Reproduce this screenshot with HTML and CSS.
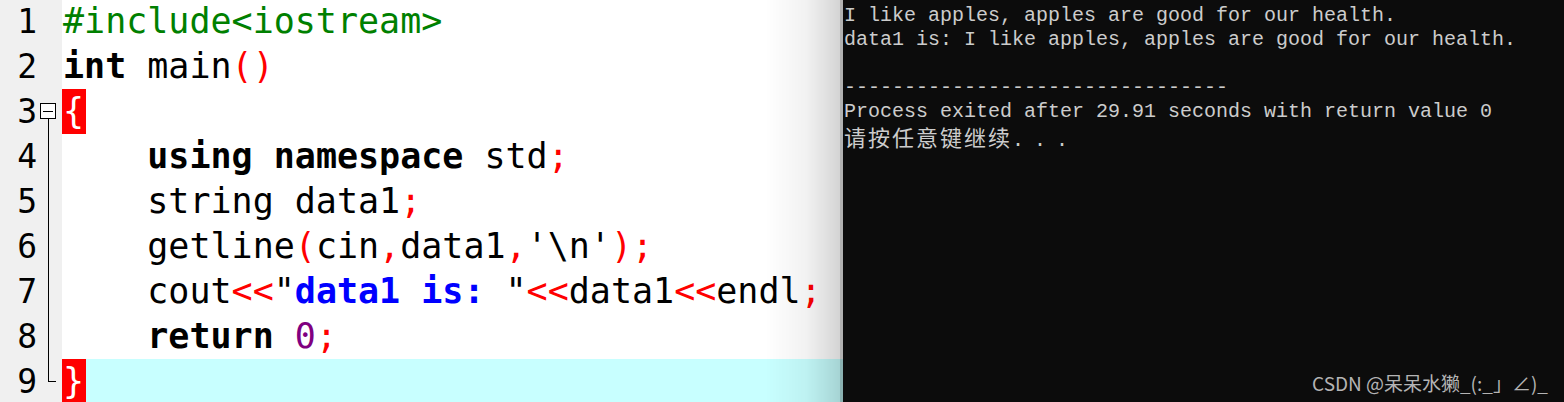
FILE: index.html
```html
<!DOCTYPE html>
<html lang="zh-CN">
<head>
<meta charset="utf-8">
<title>Dev-C++ getline</title>
<link rel="stylesheet" href="styles.css">
</head>
<body>
<div class="screen">
  <div class="editor">
    <div class="gutter">
      <div class="numbers">
        <div class="num">1</div>
        <div class="num">2</div>
        <div class="num">3</div>
        <div class="num">4</div>
        <div class="num">5</div>
        <div class="num">6</div>
        <div class="num">7</div>
        <div class="num">8</div>
        <div class="num">9</div>
      </div>
      <div class="fold">
        <svg class="fold-svg" width="24" height="402" viewBox="0 0 24 402">
          <rect x="2.5" y="103.5" width="15" height="15" fill="#ffffff" stroke="#000000" stroke-width="1"/>
          <line x1="5" y1="111.5" x2="15" y2="111.5" stroke="#000000" stroke-width="1"/>
          <line x1="10.5" y1="119" x2="10.5" y2="381" stroke="#000000" stroke-width="1"/>
          <line x1="10" y1="381.5" x2="18" y2="381.5" stroke="#000000" stroke-width="1"/>
        </svg>
      </div>
    </div>
    <div class="code">
      <div class="line"><span class="pre">#include&lt;iostream&gt;</span></div>
      <div class="line"><span class="kw">int</span> main<span class="sym">()</span></div>
      <div class="line"><span class="match">{</span></div>
      <div class="line">    <span class="kw">using</span> <span class="kw">namespace</span> std<span class="sym">;</span></div>
      <div class="line">    string data1<span class="sym">;</span></div>
      <div class="line">    getline<span class="sym">(</span>cin<span class="sym">,</span>data1<span class="sym">,</span>'\n'<span class="sym">);</span></div>
      <div class="line">    cout<span class="sym">&lt;&lt;</span>"<span class="str">data1 is: </span>"<span class="sym">&lt;&lt;</span>data1<span class="sym">&lt;&lt;</span>endl<span class="sym">;</span></div>
      <div class="line">    <span class="kw">return</span> <span class="num-lit">0</span><span class="sym">;</span></div>
      <div class="line current"><span class="match">}</span></div>
    </div>
  </div>
  <div class="console">
    <div class="out">I like apples, apples are good for our health.</div>
    <div class="out">data1 is: I like apples, apples are good for our health.</div>
    <div class="out">&nbsp;</div>
    <div class="out">--------------------------------</div>
    <div class="out">Process exited after 29.91 seconds with return value 0</div>
    <div class="out"><span class="cjk">请按任意键继续</span><span class="dots">. . .</span></div>
    <div class="watermark">CSDN @呆呆水獭_(:_」∠)_</div>
  </div>
</div>
</body>
</html>
```

FILE: styles.css
```css
html, body {
  margin: 0;
  padding: 0;
  background: #0c0c0c;
}

.screen {
  display: flex;
  width: 1564px;
  height: 402px;
  overflow: hidden;
}

.editor {
  position: relative;
  display: flex;
  width: 843px;
  flex: none;
  background: #ffffff;
  overflow: hidden;
}

.editor::after {
  content: "";
  position: absolute;
  top: 0;
  right: 0;
  width: 78px;
  height: 100%;
  background: linear-gradient(to right, rgba(0,0,0,0) 0%, rgba(0,0,0,0.05) 55%, rgba(0,0,0,0.17) 100%);
  border-right: 3px solid rgba(0,0,0,0.3);
  box-sizing: border-box;
}

.gutter {
  display: flex;
  width: 62px;
  flex: none;
  background: #f0f0f0;
}

.numbers {
  width: 38px;
  margin-top: -1px;
  font-family: "DejaVu Sans Mono", monospace;
  font-size: 33px;
  line-height: 45px;
  color: #000000;
  text-align: right;
}

.num {
  height: 45px;
  padding-right: 1px;
}

.fold {
  width: 24px;
}

.fold-svg {
  display: block;
}

.code {
  flex: 1;
  margin-top: -1px;
  padding-left: 1px;
  font-family: "DejaVu Sans Mono", monospace;
  font-size: 35px;
  line-height: 45px;
  color: #000000;
}

.line {
  height: 45px;
  white-space: pre;
}

.line.current {
  background: #c8ffff;
  margin-left: -1px;
  padding-left: 1px;
}

.pre {
  color: #008000;
}

.kw {
  font-weight: bold;
}

.sym {
  color: #ff0000;
}

.str {
  color: #0000ff;
  font-weight: bold;
}

.num-lit {
  color: #800080;
}

.match {
  display: inline-block;
  background: #ff0000;
  color: #ffffff;
  padding-right: 2px;
  margin-left: -1px;
  padding-left: 1px;
}

.console {
  position: relative;
  flex: 1;
  background: #0c0c0c;
  padding: 4px 0 0 1px;
  font-family: "Liberation Mono", monospace;
  font-size: 20px;
  line-height: 24px;
  color: #cccccc;
}

.out {
  height: 24px;
  white-space: pre;
}

.cjk {
  font-family: "Noto Sans CJK SC", sans-serif;
  font-size: 22px;
  letter-spacing: 2px;
}

.dots {
  letter-spacing: -1px;
}

.watermark {
  position: absolute;
  right: 16px;
  bottom: 8px;
  font-family: "Noto Sans CJK SC", "Liberation Sans", sans-serif;
  font-size: 19px;
  line-height: 22px;
  color: #b4b4b4;
  white-space: nowrap;
}
```
